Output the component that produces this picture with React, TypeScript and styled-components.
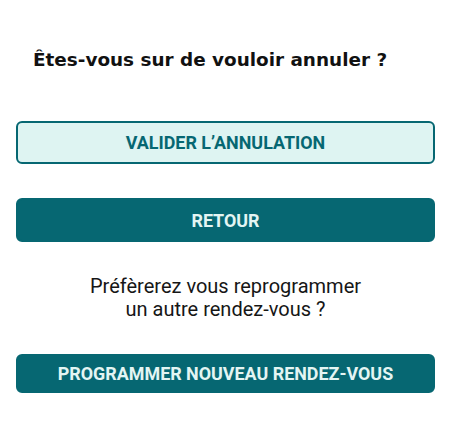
import React from "react";
import styled, { createGlobalStyle } from "styled-components";

const Global = createGlobalStyle`
  html, body { margin: 0; padding: 0; background: #ffffff; }
  body { font-family: Roboto, "Noto Sans", sans-serif; }
`;

const Page = styled.div`
  display: flex;
  flex-direction: column;
  padding: 48px 16px 0 16px;
  width: 451px;
  box-sizing: border-box;
`;

const Title = styled.h1`
  margin: 0 0 0 17px;
  font-family: "DejaVu Sans", "Open Sans", sans-serif;
  font-weight: 700;
  font-size: 18.4px;
  line-height: 24px;
  color: #111111;
`;

const Button = styled.button<{ $variant: "outline" | "solid"; $height: number }>`
  display: flex;
  align-items: center;
  justify-content: center;
  width: 100%;
  height: ${(p) => p.$height}px;
  box-sizing: border-box;
  border-radius: 6px;
  font-family: Roboto, sans-serif;
  font-weight: 700;
  font-size: 17.9px;
  text-transform: uppercase;
  cursor: pointer;
  border: 2px solid #066772;
  background: ${(p) => (p.$variant === "outline" ? "#def4f2" : "#066772")};
  color: ${(p) => (p.$variant === "outline" ? "#066772" : "#e3f5f3")};
`;

const Question = styled.p`
  margin: 0;
  text-align: center;
  font-family: Roboto, sans-serif;
  font-size: 20px;
  line-height: 23px;
  color: #161616;
`;

const Gap = styled.div<{ $h: number }>`
  height: ${(p) => p.$h}px;
`;

export default function App() {
  return (
    <>
      <Global />
      <Page>
        <Title>Êtes-vous sur de vouloir annuler ?</Title>
        <Gap $h={49} />
        <Button $variant="outline" $height={43}>Valider l’annulation</Button>
        <Gap $h={34} />
        <Button $variant="solid" $height={44}>Retour</Button>
        <Gap $h={33} />
        <Question>
          Préfèrerez vous reprogrammer
          <br />
          un autre rendez-vous ?
        </Question>
        <Gap $h={33} />
        <Button $variant="solid" $height={39}>Programmer nouveau rendez-vous</Button>
      </Page>
    </>
  );
}
